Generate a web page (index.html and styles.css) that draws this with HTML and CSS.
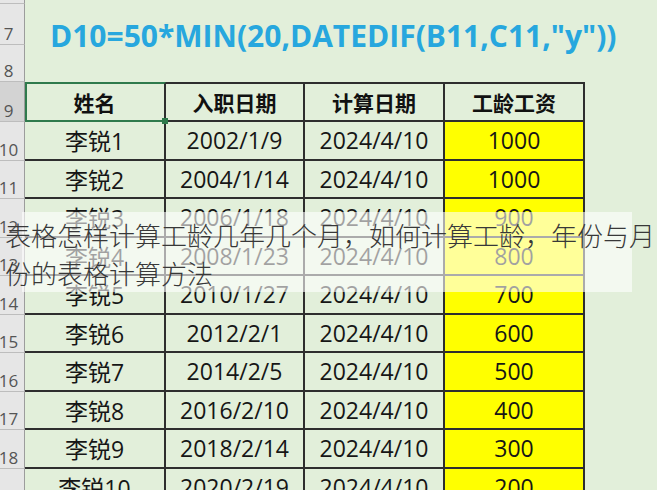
FILE: index.html
```html
<!DOCTYPE html>
<html lang="zh-CN">
<head>
<meta charset="utf-8">
<title>表格怎样计算工龄</title>
<link rel="stylesheet" href="styles.css">
</head>
<body>
<div class="sheet">
  <div class="rh">6</div><div class="fill"></div>
  <div class="rh">7</div><div class="formula">D10=50*MIN(20,DATEDIF(B11,C11,"y"))</div>
  <div class="rh">8</div><div class="fill"></div>

  <div class="rh rh-sel">9</div>
  <div class="cell th sel">姓名</div><div class="cell th">入职日期</div><div class="cell th">计算日期</div><div class="cell th">工龄工资</div>

  <div class="rh">10</div><div class="cell">李锐1</div><div class="cell">2002/1/9</div><div class="cell">2024/4/10</div><div class="cell pay">1000</div>
  <div class="rh">11</div><div class="cell">李锐2</div><div class="cell">2004/1/14</div><div class="cell">2024/4/10</div><div class="cell pay">1000</div>
  <div class="rh">12</div><div class="cell">李锐3</div><div class="cell">2006/1/18</div><div class="cell">2024/4/10</div><div class="cell pay">900</div>
  <div class="rh">13</div><div class="cell">李锐4</div><div class="cell">2008/1/23</div><div class="cell">2024/4/10</div><div class="cell pay">800</div>
  <div class="rh">14</div><div class="cell">李锐5</div><div class="cell">2010/1/27</div><div class="cell">2024/4/10</div><div class="cell pay">700</div>
  <div class="rh">15</div><div class="cell">李锐6</div><div class="cell">2012/2/1</div><div class="cell">2024/4/10</div><div class="cell pay">600</div>
  <div class="rh">16</div><div class="cell">李锐7</div><div class="cell">2014/2/5</div><div class="cell">2024/4/10</div><div class="cell pay">500</div>
  <div class="rh">17</div><div class="cell">李锐8</div><div class="cell">2016/2/10</div><div class="cell">2024/4/10</div><div class="cell pay">400</div>
  <div class="rh">18</div><div class="cell">李锐9</div><div class="cell">2018/2/14</div><div class="cell">2024/4/10</div><div class="cell pay">300</div>
  <div class="rh">19</div><div class="cell">李锐10</div><div class="cell">2020/2/19</div><div class="cell">2024/4/10</div><div class="cell pay">200</div>
</div>
<div class="caption-box"></div>
<div class="caption">表格怎样计算工龄几年几个月，如何计算工龄，年份与月份的表格计算方法</div>
</body>
</html>
```
FILE: styles.css
```css
html, body {
  margin: 0;
  padding: 0;
}
body {
  width: 657px;
  height: 490px;
  overflow: hidden;
  background: #e2efda;
  position: relative;
  font-family: "Open Sans", "Noto Sans CJK SC", sans-serif;
}
.sheet {
  display: grid;
  grid-template-columns: 25px 141px 139px 140px 140px;
  grid-template-rows: 4px 41px 37px 40px repeat(10, 38.5px);
}
.rh {
  box-sizing: border-box;
  background: #e6e6e6;
  border-right: 1px solid #9c9c9c;
  border-bottom: 1px solid #bdbdbd;
  color: #555;
  font-family: "Open Sans", sans-serif;
  font-size: 17px;
  line-height: 17px;
  display: flex;
  align-items: flex-end;
  justify-content: center;
  padding: 0 7px 2px 0;
  overflow: hidden;
}
.rh-sel {
  background: #d3d3d3;
}
.fill {
  grid-column: 2 / -1;
}
.formula {
  grid-column: 2 / -1;
  box-sizing: border-box;
  padding: 12px 0 0 25px;
  font-family: "Open Sans", sans-serif;
  font-weight: 700;
  font-size: 30px;
  line-height: 40px;
  color: #27a7de;
  white-space: nowrap;
  overflow: visible;
}
.cell {
  box-sizing: border-box;
  border-right: 2px solid #2e2e2e;
  border-bottom: 2px solid #2e2e2e;
  display: flex;
  align-items: center;
  justify-content: center;
  font-size: 23px;
  color: #161616;
  white-space: nowrap;
  overflow: hidden;
}
.th {
  border-top: 2px solid #2e2e2e;
  font-family: "Noto Sans CJK SC", sans-serif;
  font-weight: 700;
  font-size: 21px;
  color: #111;
}
.pay {
  background: #ffff00;
}
.sel {
  position: relative;
  overflow: visible;
  border-top: 2px solid #2f7a4c;
  border-bottom: 2px solid #2f7a4c;
  box-shadow: inset 2px 0 0 #2f7a4c;
}
.sel::after {
  content: "";
  position: absolute;
  right: -4px;
  bottom: -4px;
  width: 6px;
  height: 6px;
  background: #2f7a4c;
}
.caption-box {
  position: absolute;
  left: 22px;
  top: 212px;
  width: 610px;
  height: 80px;
  background: rgba(255, 255, 255, 0.6);
}
.caption {
  position: absolute;
  left: 5px;
  top: 216px;
  width: 652px;
  font-family: "Noto Sans CJK SC", sans-serif;
  font-weight: 300;
  font-size: 26px;
  line-height: 38px;
  color: #383838;
}
```
